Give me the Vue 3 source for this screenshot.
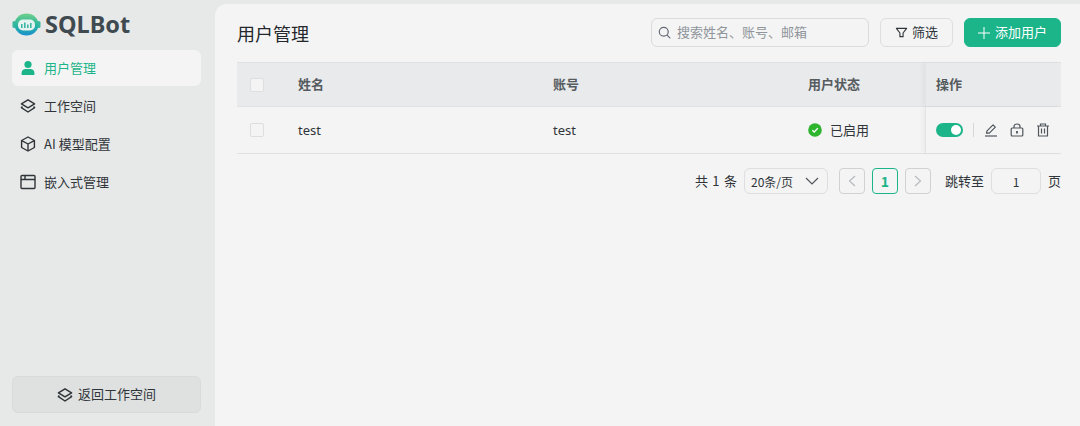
<script setup>
const menus = [
  { name: '用户管理', icon: 'user', active: true },
  { name: '工作空间', icon: 'layers' },
  { name: 'AI 模型配置', icon: 'box' },
  { name: '嵌入式管理', icon: 'window' }
]
</script>

<template>
  <div class="layout">
    <aside class="sidebar">
      <div class="logo">
        <svg class="logo-icon" width="30" height="26" viewBox="0 0 30 26">
          <defs>
            <linearGradient id="logoGrad" x1="0" y1="0" x2="0" y2="1">
              <stop offset="0" stop-color="#6fd08a" />
              <stop offset="0.55" stop-color="#27b5a0" />
              <stop offset="1" stop-color="#1b8fd0" />
            </linearGradient>
          </defs>
          <rect x="0.5" y="10" width="3" height="7" rx="1.5" fill="#38b8a0" />
          <rect x="25.5" y="10" width="3" height="7" rx="1.5" fill="#38b8a0" />
          <ellipse cx="14.5" cy="13.5" rx="12" ry="11" fill="url(#logoGrad)" />
          <rect x="6" y="8.5" width="17" height="11" rx="5" fill="#e4f3ef" />
          <rect x="9" y="13" width="1.6" height="4" fill="#3fb6a6" />
          <rect x="12" y="11.5" width="1.6" height="5.5" fill="#3fb6a6" />
          <rect x="15" y="13.5" width="1.6" height="3.5" fill="#3fb6a6" />
          <rect x="18" y="12" width="1.6" height="5" fill="#3fb6a6" />
        </svg>
        <span class="logo-text">SQLBot</span>
      </div>

      <nav class="menu">
        <div v-for="m in menus" :key="m.name" class="menu-item" :class="{ active: m.active }">
          <svg v-if="m.icon === 'user'" width="16" height="16" viewBox="0 0 16 16" fill="#1cb58a">
            <circle cx="8" cy="4.5" r="3.6" />
            <path d="M1.6 15v-2.2C1.6 10.6 3.4 9 5.6 9h4.8c2.200 0 4 1.600 4 3.800V15z" />
          </svg>
          <svg v-else-if="m.icon === 'layers'" width="16" height="16" viewBox="0 0 16 16" fill="none" stroke="#2f3438" stroke-width="1.400" stroke-linejoin="round">
            <path d="M8 1.800 14.600 5.800 8 9.800 1.400 5.800z" />
            <path d="M2.400 8.600 1.400 9.600 8 14 14.600 9.600 13.600 8.600" />
          </svg>
          <svg v-else-if="m.icon === 'box'" width="16" height="16" viewBox="0 0 16 16" fill="none" stroke="#2f3438" stroke-width="1.400" stroke-linejoin="round">
            <path d="M8 1 14.400 4.500V11.500L8 15 1.600 11.500V4.500z" />
            <path d="M1.800 4.600 8 8 14.200 4.600M8 8V14.800" />
          </svg>
          <svg v-else width="16" height="16" viewBox="0 0 16 16" fill="none" stroke="#2f3438" stroke-width="1.400">
            <rect x="1" y="1.500" width="14" height="13" rx="1" />
            <path d="M1 5.500H15M5 1.500V5.500" />
          </svg>
          <span>{{ m.name }}</span>
        </div>
      </nav>

      <div class="back-btn">
        <svg width="16" height="16" viewBox="0 0 16 16" fill="none" stroke="#2f3438" stroke-width="1.500" stroke-linejoin="round">
          <path d="M8 1.800 14.600 5.800 8 9.800 1.400 5.800z" />
          <path d="M2.400 8.600 1.400 9.600 8 14 14.600 9.600 13.600 8.600" />
        </svg>
        <span>返回工作空间</span>
      </div>
    </aside>

    <main class="content">
      <header class="head">
        <h1>用户管理</h1>
        <div class="tools">
          <div class="search">
            <svg width="13" height="13" viewBox="0 0 14 14" fill="none" stroke="#646a73" stroke-width="1.300" stroke-linecap="round">
              <circle cx="6.200" cy="6.200" r="4.800" />
              <path d="M9.800 9.800 12.800 12.800" />
            </svg>
            <span>搜索姓名、账号、邮箱</span>
          </div>
          <div class="btn">
            <svg width="13" height="13" viewBox="0 0 14 14" fill="none" stroke="#2f3438" stroke-width="1.200" stroke-linejoin="round">
              <path d="M1.500 2.500H12.500L8.700 7.500V11.500H5.300V7.500z" />
            </svg>
            <span>筛选</span>
          </div>
          <div class="btn primary">
            <svg width="12" height="12" viewBox="0 0 12 12" stroke="#fff" stroke-width="1">
              <path d="M6 0V12M0 6H12" />
            </svg>
            <span>添加用户</span>
          </div>
        </div>
      </header>

      <div class="table">
        <div class="tr th">
          <div class="cell check"><i class="box"></i></div>
          <div class="cell name"><span>姓名</span></div>
          <div class="cell account"><span>账号</span></div>
          <div class="cell status"><span>用户状态</span></div>
          <div class="cell ops"><span>操作</span></div>
        </div>
        <div class="tr td">
          <div class="cell check"><i class="box"></i></div>
          <div class="cell name">test</div>
          <div class="cell account">test</div>
          <div class="cell status">
            <svg class="ok" width="14" height="14" viewBox="0 0 14 14">
              <circle cx="7" cy="7" r="6.800" fill="#2db52d" />
              <path d="M4.300 7.200 6.200 9 9.800 5.300" fill="none" stroke="#fff" stroke-width="1.300" />
            </svg>
            <span>已启用</span>
          </div>
          <div class="cell ops">
            <span class="switch"><i></i></span>
            <span class="sep"></span>
            <svg width="14" height="14" viewBox="0 0 14 14" fill="none" stroke="#50565c" stroke-width="1.200" stroke-linejoin="round">
              <path d="M2.500 10.200 3 7.800 9 1.800 11.300 4.100 5.300 10.100z" />
              <path d="M1 13H13" />
            </svg>
            <svg width="14" height="14" viewBox="0 0 14 14" fill="none" stroke="#50565c" stroke-width="1.200">
              <rect x="1.200" y="5" width="11.600" height="8" rx="1" />
              <path d="M4 5V3.500C4 1.900 5.300 1 7 1s3 .9 3 2.500V5" />
              <path d="M7 8V10.500" stroke-width="1.800" />
            </svg>
            <svg width="14" height="14" viewBox="0 0 14 14" fill="none" stroke="#50565c" stroke-width="1.200">
              <path d="M1 3H13M4.500 3V1H9.500V3" />
              <path d="M2.500 3V13H11.500V3" />
              <path d="M5.500 5.500V10.500M8.500 5.500V10.500" />
            </svg>
          </div>
        </div>
      </div>

      <footer class="pager">
        <span class="total">共 1 条</span>
        <div class="size">
          <span>20条/页</span>
          <svg width="14" height="8" viewBox="0 0 14 8" fill="none" stroke="#50565c" stroke-width="1.200">
            <path d="M1 1 7 7 13 1" />
          </svg>
        </div>
        <div class="page-btn">
          <svg width="8" height="12" viewBox="0 0 8 12" fill="none" stroke="#b4b8bd" stroke-width="1.100">
            <path d="M7 1 1.500 6 7 11" />
          </svg>
        </div>
        <div class="page-btn current">1</div>
        <div class="page-btn">
          <svg width="8" height="12" viewBox="0 0 8 12" fill="none" stroke="#b4b8bd" stroke-width="1.100">
            <path d="M1 1 6.500 6 1 11" />
          </svg>
        </div>
        <span class="jump">跳转至</span>
        <div class="jump-input">1</div>
        <span class="unit">页</span>
      </footer>
    </main>
  </div>
</template>

<style scoped>
.layout {
  display: flex;
  width: 1080px;
  height: 426px;
  overflow: hidden;
  background: #e7e9e8;
  font-family: "Noto Sans CJK SC", "Noto Sans", sans-serif;
  font-size: 13px;
  color: #30353a;
}

.sidebar {
  width: 215px;
  flex: none;
  box-sizing: border-box;
  padding: 0 14px 13px 12px;
  display: flex;
  flex-direction: column;
}

.logo {
  height: 50px;
  display: flex;
  align-items: center;
  gap: 3px;
  padding-bottom: 2px;
  box-sizing: border-box;
}

.logo-text {
  font-family: "Noto Sans", sans-serif;
  font-size: 23.500px;
  font-weight: 700;
  color: #3f4a50;
  margin-bottom: 1px;
}

.menu {
  display: flex;
  flex-direction: column;
  gap: 2px;
  flex: 1;
}

.menu-item {
  height: 36px;
  display: flex;
  align-items: center;
  gap: 8px;
  padding-left: 8px;
  border-radius: 6px;
}

.menu-item span,
.back-btn span,
.btn span,
.search span,
.status span,
.th .cell span {
  margin-bottom: 2px;
}

.menu-item.active {
  background: #f4f4f4;
  color: #1cb58a;
}

.back-btn {
  height: 37px;
  display: flex;
  align-items: center;
  justify-content: center;
  gap: 5px;
  background: #dfe1e0;
  border: 1px solid #d9dbda;
  border-radius: 6px;
  box-sizing: border-box;
}

.content {
  flex: 1;
  margin-top: 4px;
  padding: 0 19px 0 22px;
  background: #f4f4f4;
  border-top-left-radius: 12px;
}

.head {
  height: 58px;
  display: flex;
  align-items: center;
  justify-content: space-between;
}

.head h1 {
  margin: 0;
  font-size: 18px;
  font-weight: 400;
  color: #24282c;
}

.tools {
  display: flex;
  align-items: center;
  gap: 11px;
  margin-bottom: 1px;
}

.search {
  width: 218px;
  height: 29px;
  box-sizing: border-box;
  border: 1px solid #d9dbdc;
  border-radius: 6px;
  display: flex;
  align-items: center;
  gap: 6px;
  padding-left: 6px;
  color: #8f959b;
}

.btn {
  height: 29px;
  box-sizing: border-box;
  width: 73px;
  border: 1px solid #dcdedf;
  border-radius: 6px;
  display: flex;
  align-items: center;
  justify-content: center;
  gap: 4px;
}

.btn.primary {
  width: 97px;
  background: #1cb58a;
  border-color: #1cb58a;
  color: #fff;
  gap: 5px;
}

.tr {
  display: flex;
  align-items: stretch;
}

.th {
  height: 45px;
  background: #e9eaec;
  border-top: 1px solid #dfe1e2;
  border-bottom: 1px solid #dfe1e2;
  box-sizing: border-box;
  font-weight: 700;
  color: #565b60;
}

.td {
  height: 47px;
  border-bottom: 1px solid #dfe1e2;
  box-sizing: border-box;
}

.cell {
  display: flex;
  align-items: center;
}

.check {
  width: 61px;
  padding-left: 13px;
  box-sizing: border-box;
}

.box {
  width: 12px;
  height: 12px;
  border: 1px solid #dcdee0;
  border-radius: 2px;
  background: #f4f4f4;
}

.name,
.account {
  width: 255px;
}

.status {
  width: 117px;
  gap: 8px;
}

.td .name,
.td .account {
  font-family: "Noto Sans", sans-serif;
  font-size: 13px;
}

.ops {
  flex: 1;
  padding-left: 10px;
  border-left: 1px solid #e2e3e4;
  box-shadow: -3px 0 4px rgba(0, 0, 0, 0.03);
}

.td .ops {
  gap: 12px;
  padding-bottom: 1px;
  box-sizing: border-box;
}

.switch {
  width: 27px;
  height: 14px;
  border-radius: 7px;
  background: #1cb58a;
  display: flex;
  justify-content: flex-end;
  align-items: center;
  padding-right: 2px;
  box-sizing: border-box;
}

.switch i {
  width: 10px;
  height: 10px;
  border-radius: 50%;
  background: #fff;
}

.sep {
  width: 1px;
  height: 14px;
  background: #d5d7d9;
  margin: 0 -2px;
}

.pager {
  display: flex;
  align-items: center;
  justify-content: flex-end;
  height: 26px;
  margin-top: 14px;
}

.total {
  margin-right: 7px;
  margin-bottom: 2px;
  word-spacing: 1.500px;
}

.size {
  width: 84px;
  height: 26px;
  box-sizing: border-box;
  border: 1px solid #dcdedf;
  border-radius: 6px;
  display: flex;
  align-items: center;
  justify-content: space-between;
  padding: 0 8px 0 6px;
  font-size: 12px;
  margin-right: 11px;
}

.page-btn {
  width: 26px;
  height: 26px;
  box-sizing: border-box;
  border: 1px solid #cfd1d3;
  border-radius: 4px;
  display: flex;
  align-items: center;
  justify-content: center;
  margin-right: 7px;
}

.page-btn.current {
  border-color: #1cb58a;
  color: #1cb58a;
  font-weight: 700;
  font-size: 14px;
}

.jump {
  margin-left: 7px;
  margin-right: 7px;
  margin-bottom: 2px;
}

.jump-input {
  width: 50px;
  height: 26px;
  box-sizing: border-box;
  border: 1px solid #dcdedf;
  border-radius: 6px;
  display: flex;
  align-items: center;
  justify-content: center;
  font-size: 12px;
  margin-right: 7px;
}

.unit {
  width: 13px;
  margin-bottom: 2px;
}
</style>

<style>
html,
body {
  margin: 0;
  background: #f4f4f4;
}
</style>
